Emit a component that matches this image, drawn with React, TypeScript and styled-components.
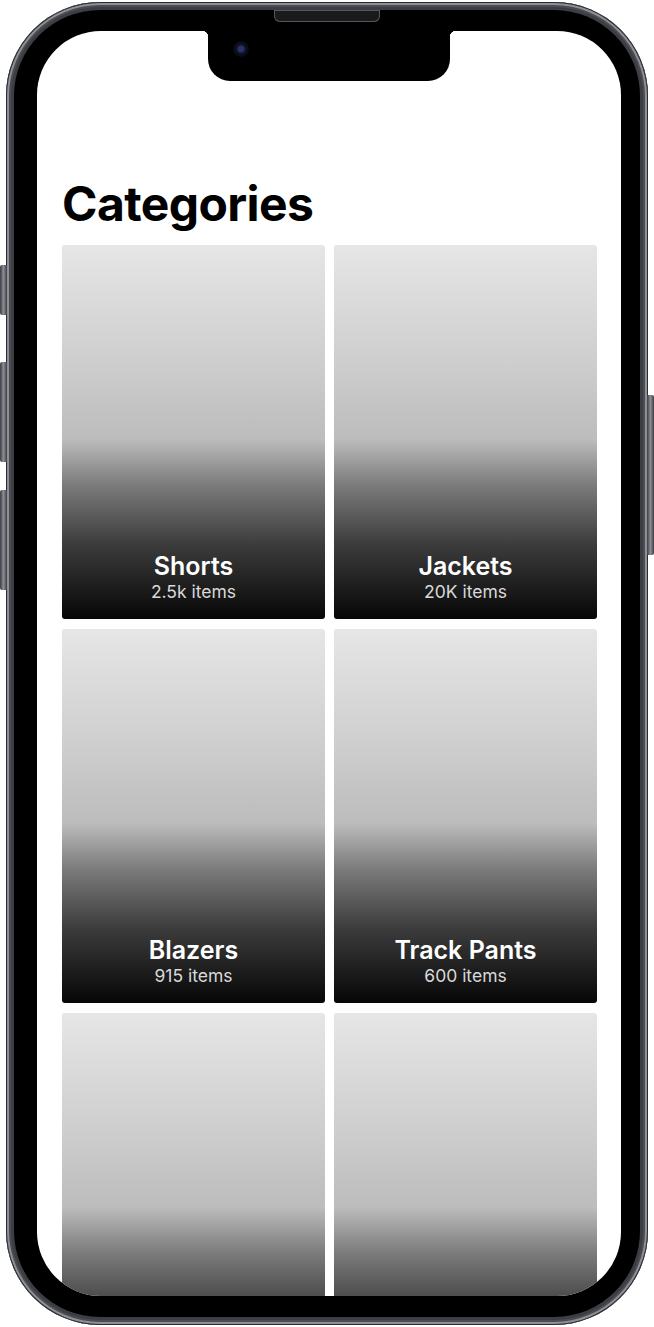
import React from 'react';
import styled, { createGlobalStyle } from 'styled-components';

const GlobalStyle = createGlobalStyle`
  html, body {
    margin: 0;
    padding: 0;
    background: #ffffff;
  }
  body {
    font-family: Inter, "Noto Sans", "Liberation Sans", sans-serif;
  }
`;

interface ICategory {
  name: string;
  count: string;
}

const categories: ICategory[] = [
  { name: 'Shorts', count: '2.5k items' },
  { name: 'Jackets', count: '20K items' },
  { name: 'Blazers', count: '915 items' },
  { name: 'Track Pants', count: '600 items' },
  { name: 'Sweaters', count: '340 items' },
  { name: 'Hoodies', count: '1.2k items' },
];

const Stage = styled.div`
  position: relative;
  width: 654px;
  height: 1327px;
  padding: 2px 6px;
  box-sizing: border-box;
  background: #ffffff;
`;

const SideButton = styled.div<{ $side: 'left' | 'right'; $top: number; $height: number }>`
  position: absolute;
  top: ${(p) => p.$top}px;
  ${(p) => (p.$side === 'left' ? 'left: 0;' : 'right: 0;')}
  width: 7px;
  height: ${(p) => p.$height}px;
  border-radius: ${(p) => (p.$side === 'left' ? '2px 0 0 2px' : '0 2px 2px 0')};
  background: linear-gradient(90deg, #3b3d42, #8a8d93 50%, #3b3d42);
`;

const Phone = styled.div`
  height: 100%;
  box-sizing: border-box;
  border-radius: 94px;
  padding: 8px;
  background: #3c3e43;
  box-shadow: inset 0 0 0 1px #2a2b2f, inset 0 0 0 3px #8d9096, inset 0 0 0 5px #4a4c51;
`;

const Bezel = styled.div`
  height: 100%;
  box-sizing: border-box;
  border-radius: 86px;
  padding: 21px 19px 21px 23px;
  background: #000000;
  position: relative;
`;

const Speaker = styled.div`
  position: absolute;
  top: 0px;
  left: 260px;
  width: 106px;
  height: 12px;
  border-radius: 0 0 6px 6px;
  background: #1a1a1c;
  box-shadow: inset 0 0 0 1px #55575c;
  z-index: 3;
`;

const Screen = styled.div`
  position: relative;
  height: 100%;
  border-radius: 64px;
  overflow: hidden;
  background: #ffffff;
  padding: 144px 24px 0 25px;
  box-sizing: border-box;
`;

const Notch = styled.div`
  position: absolute;
  top: 0;
  left: 171px;
  width: 242px;
  height: 50px;
  background: #000000;
  border-radius: 0 0 22px 22px;
  z-index: 2;

  &::before,
  &::after {
    content: '';
    position: absolute;
    top: 0;
    width: 6px;
    height: 6px;
    background: radial-gradient(circle at 0 100%, transparent 6px, #000 6.5px);
  }
  &::before {
    left: -6px;
  }
  &::after {
    right: -6px;
    background: radial-gradient(circle at 100% 100%, transparent 6px, #000 6.5px);
  }
`;

const Camera = styled.div`
  position: absolute;
  top: 10px;
  left: 25px;
  width: 16px;
  height: 16px;
  border-radius: 50%;
  background: radial-gradient(circle, #2a2f6e 0 3px, #12142a 4px, #07080f 8px);
`;

const Title = styled.h1`
  margin: 0 0 12px;
  font-size: 48px;
  line-height: 58px;
  font-weight: 700;
  letter-spacing: -0.6px;
  color: #000000;
`;

const Grid = styled.div`
  display: grid;
  grid-template-columns: 263px 263px;
  column-gap: 9px;
  row-gap: 10px;
`;

const Card = styled.div`
  height: 374px;
  border-radius: 3px;
  background: linear-gradient(
    180deg,
    #e6e6e6 0%,
    #cfcfcf 30%,
    #bcbcbc 52%,
    #7c7c7c 64%,
    #3c3c3c 80%,
    #060606 100%
  );
  display: flex;
  flex-direction: column;
  justify-content: flex-end;
  align-items: center;
  padding-bottom: 16px;
  box-sizing: border-box;
`;

const CardName = styled.div`
  font-size: 25px;
  line-height: 30px;
  font-weight: 600;
  color: #ffffff;
`;

const CardCount = styled.div`
  font-size: 17.5px;
  line-height: 22px;
  font-weight: 400;
  color: #d9d9d9;
`;

export default function App() {
  return (
    <>
      <GlobalStyle />
      <Stage>
        <SideButton $side="left" $top={265} $height={50} />
        <SideButton $side="left" $top={362} $height={100} />
        <SideButton $side="left" $top={490} $height={100} />
        <SideButton $side="right" $top={395} $height={160} />
        <Phone>
          <Bezel>
            <Speaker />
            <Screen>
              <Notch>
                <Camera />
              </Notch>
              <Title>Categories</Title>
              <Grid>
                {categories.map((c) => (
                  <Card key={c.name}>
                    <CardName>{c.name}</CardName>
                    <CardCount>{c.count}</CardCount>
                  </Card>
                ))}
              </Grid>
            </Screen>
          </Bezel>
        </Phone>
      </Stage>
    </>
  );
}
